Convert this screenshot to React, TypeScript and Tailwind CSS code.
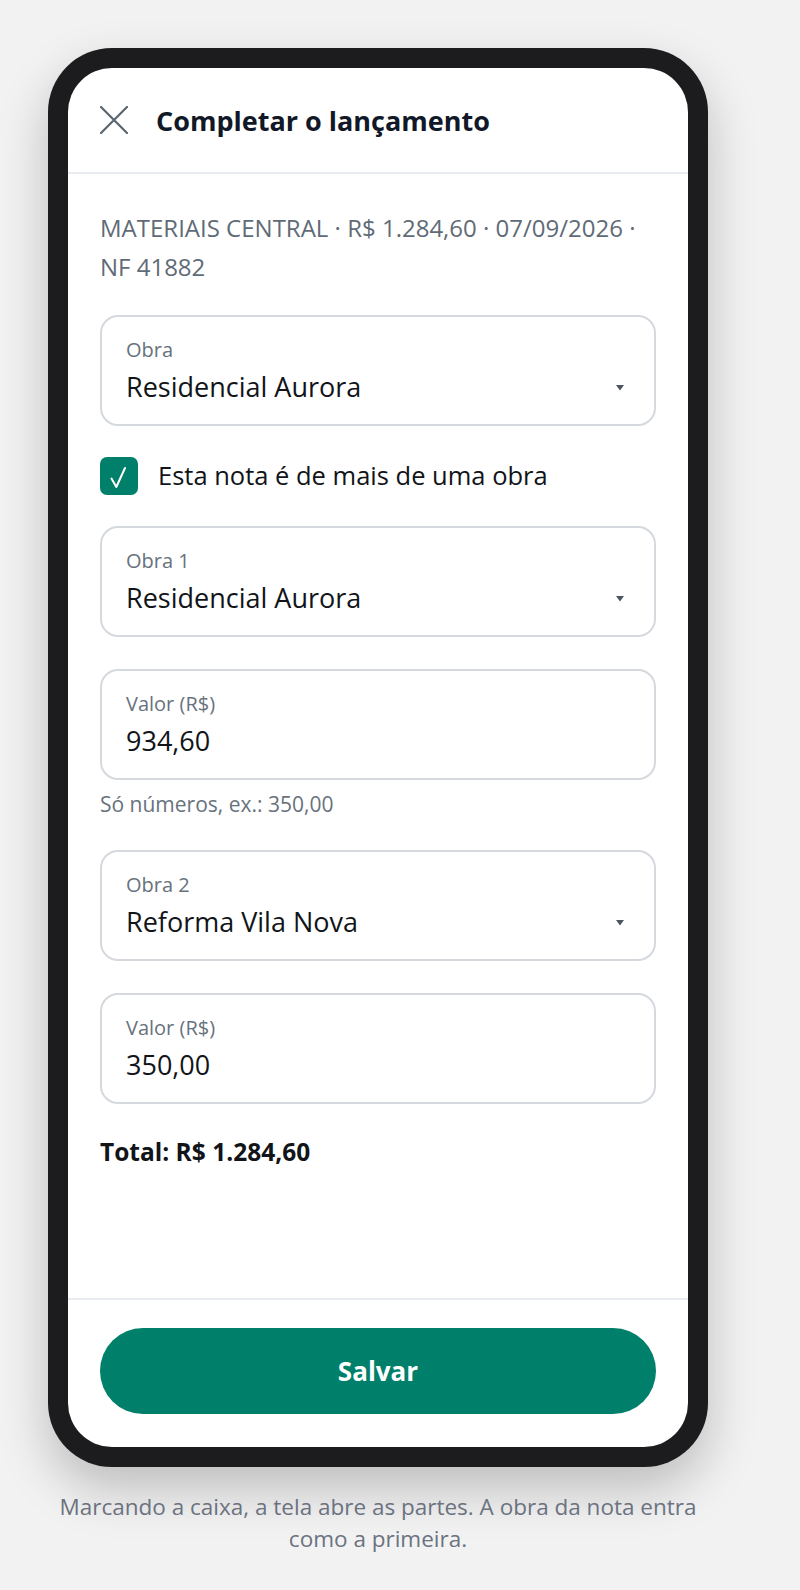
import React from 'react';

const font = { fontFamily: '"Open Sans", "Noto Sans", Arial, sans-serif' };

function Caret() {
  return (
    <svg width="10" height="7" viewBox="0 0 10 7" className="shrink-0">
      <polygon points="1,1 9,1 5,6.5" fill="#4b5563" />
    </svg>
  );
}

function SelectField({ label, value }: { label: string; value: string }) {
  return (
    <div className="flex flex-col gap-1 rounded-[18px] border-2 border-[#d5d9de] pl-6 pr-[29px] pt-[19px] pb-[18px]">
      <span className="text-[20px] leading-[28px] text-[#67727d]">{label}</span>
      <div className="flex items-center justify-between">
        <span className="text-[27px] leading-[38px] text-[#111418]">{value}</span>
        <Caret />
      </div>
    </div>
  );
}

function InputField({ label, value }: { label: string; value: string }) {
  return (
    <div className="flex flex-col gap-1 rounded-[18px] border-2 border-[#d5d9de] px-6 pt-[19px] pb-[18px]">
      <span className="text-[20px] leading-[28px] text-[#67727d]">{label}</span>
      <span className="text-[27px] leading-[38px] text-[#111418]">{value}</span>
    </div>
  );
}

export default function App() {
  return (
    <div className="min-h-screen bg-[#f2f2f2] pl-12 pt-12" style={font}>
      <div className="w-[660px]">
        {/* Phone frame */}
        <div className="rounded-[64px] bg-[#1c1c1e] p-5 shadow-[0_22px_50px_rgba(0,0,0,0.22)]">
          <div className="flex h-[1379px] flex-col overflow-hidden rounded-[44px] bg-white">
            {/* Header */}
            <div className="flex h-[106px] shrink-0 items-center gap-7 border-b-2 border-[#e8ecf0] px-8">
              <svg width="28" height="28" viewBox="0 0 28 28" className="shrink-0">
                <path d="M1 1 L27 27 M27 1 L1 27" stroke="#5b6670" strokeWidth="2.2" strokeLinecap="round" fill="none" />
              </svg>
              <h1 className="text-[27px] font-bold leading-none text-[#111827]">Completar o lançamento</h1>
            </div>

            {/* Body */}
            <div className="flex flex-1 flex-col gap-8 px-8 pt-[34px]">
              <p className="mb-[-3px] text-[24px] leading-[39px] text-[#5f6b76]">
                MATERIAIS CENTRAL · R$ 1.284,60 · 07/09/2026 · NF 41882
              </p>

              <SelectField label="Obra" value="Residencial Aurora" />

              <label className="flex h-[36px] items-center gap-5">
                <span className="flex h-[38px] w-[38px] shrink-0 items-center justify-center rounded-[7px] bg-[#00806a]">
                  <svg width="38" height="38" viewBox="0 0 38 38">
                    <path d="M11.5 21.5 L16.3 30 L25 11" stroke="#fff" strokeWidth="2" strokeLinecap="round" strokeLinejoin="round" fill="none" />
                  </svg>
                </span>
                <span className="text-[25.5px] leading-none text-[#111418]">Esta nota é de mais de uma obra</span>
              </label>

              <SelectField label="Obra 1" value="Residencial Aurora" />

              <div className="flex flex-col gap-[10px]">
                <InputField label="Valor (R$)" value="934,60" />
                <span className="text-[21px] leading-[28px] text-[#67727d]">Só números, ex.: 350,00</span>
              </div>

              <SelectField label="Obra 2" value="Reforma Vila Nova" />

              <InputField label="Valor (R$)" value="350,00" />

              <p className="text-[24.5px] font-bold leading-[32px] text-[#111418]">Total: R$ 1.284,60</p>
            </div>

            {/* Footer */}
            <div className="shrink-0 border-t-2 border-[#e8ecf0] px-8 pb-[33px] pt-7">
              <button className="flex h-[86px] w-full items-center justify-center rounded-full bg-[#00806a] text-[26px] font-bold text-white">
                Salvar
              </button>
            </div>
          </div>
        </div>

        <p className="mt-6 text-center text-[22.5px] leading-[32px] text-[#6b7280]">
          Marcando a caixa, a tela abre as partes. A obra da nota entra como a primeira.
        </p>
      </div>
    </div>
  );
}
